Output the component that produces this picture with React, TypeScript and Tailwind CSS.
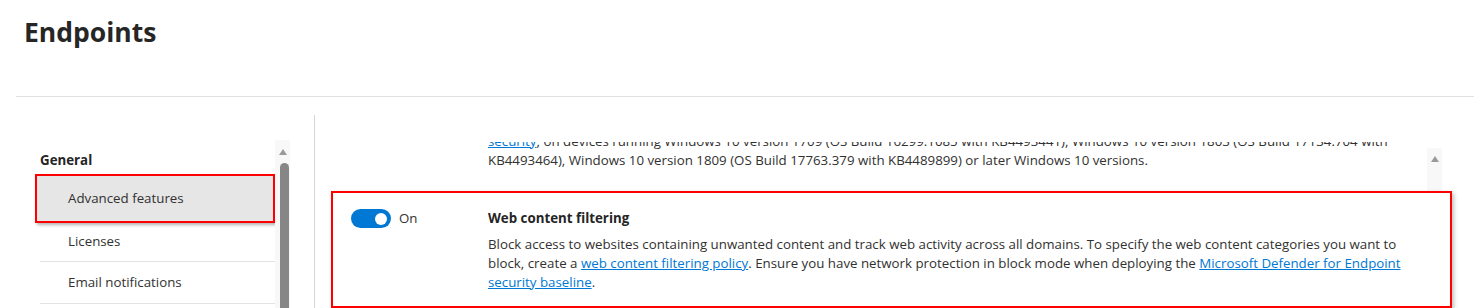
import React from 'react'

export default function App() {
  return (
    <div className="w-[1481px] h-[308px] overflow-hidden bg-white text-[#323130] font-['Open_Sans',sans-serif]">
      {/* header */}
      <div className="h-[96px] pl-6 pt-[12px]">
        <h1 className="text-[26.5px] leading-[40px] font-bold text-[#262626]">Endpoints</h1>
      </div>
      <div className="ml-4 mr-[7px] border-t border-[#e1e1e1]" />

      <div className="flex h-[211px]">
        {/* left nav */}
        <div className="ml-4 w-[298px] pl-[19px] pt-[43px] flex">
          <div className="w-[240px] text-[13.3px]">
            <div className="h-[34px] pt-[10px] pl-[5px] leading-[20px] font-bold text-[#252525]">General</div>
            <div className="h-[49px] border-2 border-[#ff0000] bg-[#e6e6e6] shadow-[2px_2px_3px_rgba(0,0,0,0.3)] flex items-center pl-[31px]">
              Advanced features
            </div>
            <div className="ml-[5px] h-[39px] border-b border-[#e3e3e3] flex items-center pl-[28px]">Licenses</div>
            <div className="ml-[5px] h-[42px] border-b border-[#e3e3e3] flex items-center pl-[28px]">Email notifications</div>
          </div>
          <div className="w-[15px] bg-[#f8f8f8] flex flex-col items-center">
            <div className="mt-[9px] w-0 h-0 border-l-[4px] border-r-[4px] border-b-[6px] border-l-transparent border-r-transparent border-b-[#9a9a9a]" />
            <div className="mt-[8px] ml-[3px] w-[9px] flex-1 rounded-t-full bg-[#868686]" />
          </div>
        </div>
        <div className="w-px bg-[#d4d4d4] mt-[18px]" />

        {/* right content */}
        <div className="flex-1 flex flex-col pl-4 pr-[29px]">
          <div className="h-[94px] flex">
            <div className="flex-1 pl-[157px] pt-[45px]">
              <div className="h-[49px] overflow-hidden text-[13.3px] leading-[19px] whitespace-nowrap">
                <div className="-mt-[10px]">
                  <div>
                    <span className="text-[#0078d4] underline">security</span>, on devices running Windows 10 version 1709 (OS Build 16299.1085 with KB4493441), Windows 10 version 1803 (OS Build 17134.704 with
                  </div>
                  <div>KB4493464), Windows 10 version 1809 (OS Build 17763.379 with KB4489899) or later Windows 10 versions.</div>
                </div>
              </div>
            </div>
            <div className="w-[15px] mr-[10px] mt-[51px] bg-[#f8f8f8] flex justify-center">
              <div className="mt-[8px] w-0 h-0 border-l-[4px] border-r-[4px] border-b-[6px] border-l-transparent border-r-transparent border-b-[#9a9a9a]" />
            </div>
          </div>

          <div className="flex-1 border-2 border-[#ff0000] bg-white shadow-[2px_2px_4px_rgba(0,0,0,0.25)] pl-[18px] pt-[15px] flex text-[13.3px]">
            <div className="w-[137px] flex items-start">
              <div className="mt-[1px] w-[40px] h-[19px] rounded-full bg-[#0078d4] flex items-center justify-end pr-[4px]">
                <div className="w-[12px] h-[12px] rounded-full bg-white" />
              </div>
              <span className="ml-[8px] leading-[20px]">On</span>
            </div>
            <div className="flex-1">
              <div className="leading-[20px] font-bold text-[#252525]">Web content filtering</div>
              <div className="mt-[7px] leading-[19px] whitespace-nowrap">
                <div>Block access to websites containing unwanted content and track web activity across all domains. To specify the web content categories you want to</div>
                <div>
                  block, create a <span className="text-[#0078d4] underline">web content filtering policy</span>. Ensure you have network protection in block mode when deploying the{' '}
                  <span className="text-[#0078d4] underline">Microsoft Defender for Endpoint</span>
                </div>
                <div>
                  <span className="text-[#0078d4] underline">security baseline</span>.
                </div>
              </div>
            </div>
          </div>
        </div>
      </div>
    </div>
  )
}
